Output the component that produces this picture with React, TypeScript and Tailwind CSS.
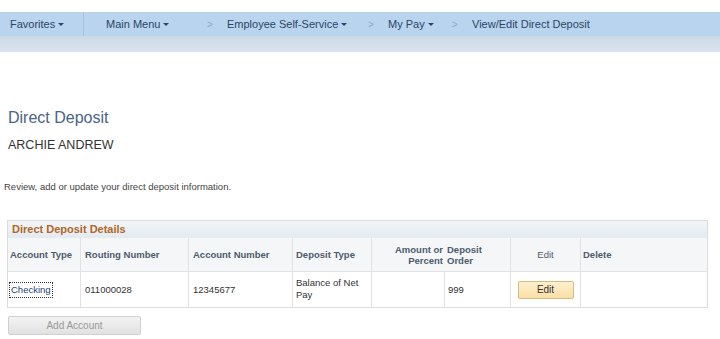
const CRUMBS = [
  { label: "Main Menu", menu: true, w: "w-[101px]" },
  { label: "Employee Self-Service", menu: true, w: "w-[141px]" },
  { label: "My Pay", menu: true, w: "w-[64px]" },
  { label: "View/Edit Direct Deposit", menu: false, w: "" },
];

function Caret() {
  return <span className="ml-[3px] inline-block align-middle border-x-[3px] border-t-[3px] border-x-transparent border-t-[#2c4566]" />;
}

export default function App() {
  return (
    <div className="w-[720px] h-[339px] bg-white overflow-hidden font-['Liberation_Sans',Arial,sans-serif]">
      <div className="h-[12px]" />
      <nav className="h-[24px] bg-[#b8d4ef] flex items-center text-[11px] text-[#2c4566]">
        <div className="w-[84px] h-full flex items-center pl-[10px] border-r border-[#a5c3e0]">
          Favorites
          <Caret />
        </div>
        <div className="flex items-center pl-[22px]">
          {CRUMBS.map((c, i) => (
            <div key={c.label} className="flex items-center">
              {i > 0 && <span className="w-[20px] text-[#8ea9c6] text-[10px]">&gt;</span>}
              <span className={`${c.w} flex items-center`}>
                {c.label}
                {c.menu && <Caret />}
              </span>
            </div>
          ))}
        </div>
      </nav>
      <div className="h-[16px] bg-gradient-to-b from-[#cbd8e6] to-[#dbe4ee]" />

      <div className="pl-[8px] pt-[56px]">
        <h1 className="text-[16px] leading-[20px] text-[#4b6483]">Direct Deposit</h1>
        <p className="mt-[9px] text-[12.5px] leading-[16px] text-[#333]">ARCHIE ANDREW</p>
      </div>
      <p className="pl-[4px] mt-[27px] text-[9.5px] text-[#444]">
        Review, add or update your direct deposit information.
      </p>

      <div className="ml-[7px] mt-[26px] w-[701px] border border-[#dcdcdc]">
        <div className="h-[17px] bg-gradient-to-b from-[#f3f6f9] to-[#e3eaf1] px-[4px] text-[11px] leading-[17px] font-bold text-[#b0671f]">
          Direct Deposit Details
        </div>
        <div className="grid grid-cols-[73px_108px_104px_79px_73px_66px_70px_1fr] text-[9.5px]">
          <div className="h-[34px] bg-[#f5f6f7] border-r border-b border-[#e2e2e2] flex items-center pl-[2px] font-bold text-[#4d5b6d]">Account Type</div>
          <div className="h-[34px] bg-[#f5f6f7] border-r border-b border-[#e2e2e2] flex items-center pl-[4px] font-bold text-[#4d5b6d]">Routing Number</div>
          <div className="h-[34px] bg-[#f5f6f7] border-r border-b border-[#e2e2e2] flex items-center pl-[4px] font-bold text-[#4d5b6d]">Account Number</div>
          <div className="h-[34px] bg-[#f5f6f7] border-r border-b border-[#e2e2e2] flex items-center pl-[3px] font-bold text-[#4d5b6d]">Deposit Type</div>
          <div className="h-[34px] bg-[#f5f6f7] border-b border-[#e2e2e2] flex items-center justify-end pr-[2px] text-right leading-[11px] font-bold text-[#4d5b6d]">Amount or<br />Percent</div>
          <div className="h-[34px] bg-[#f5f6f7] border-r border-b border-[#e2e2e2] flex items-center pl-[2px] leading-[11px] font-bold text-[#4d5b6d]">Deposit<br />Order</div>
          <div className="h-[34px] bg-[#f5f6f7] border-r border-b border-[#e2e2e2] flex items-center justify-center text-[#4d5b6d]">Edit</div>
          <div className="h-[34px] bg-[#f5f6f7] border-b border-[#e2e2e2] flex items-center pl-[2px] font-bold text-[#4d5b6d]">Delete</div>

          <div className="h-[35px] border-r border-[#e2e2e2] flex items-center pl-[2px] text-[#1c3f7a]">
            <span className="outline-1 outline-dotted outline-[#333] px-[1px]">Checking</span>
          </div>
          <div className="h-[35px] border-r border-[#e2e2e2] flex items-center pl-[4px] text-[#333]">011000028</div>
          <div className="h-[35px] border-r border-[#e2e2e2] flex items-center pl-[4px] text-[#333]">12345677</div>
          <div className="h-[35px] border-r border-[#e2e2e2] pt-[5px] pl-[3px] leading-[12px] text-[#333]">Balance of Net<br />Pay</div>
          <div className="h-[35px] border-r border-[#e2e2e2]" />
          <div className="h-[35px] border-r border-[#e2e2e2] flex items-center pl-[3px] text-[#333]">999</div>
          <div className="h-[35px] border-r border-[#e2e2e2] flex items-center justify-center">
            <button className="w-[56px] h-[18px] bg-gradient-to-b from-[#fdf0cf] to-[#f8dfa6] border border-[#d9bb7c] rounded-[2px] text-[10px] text-[#333]">Edit</button>
          </div>
          <div className="h-[35px]" />
        </div>
      </div>

      <button className="ml-[8px] mt-[8px] w-[133px] h-[19px] bg-gradient-to-b from-[#f3f3f3] to-[#e1e1e1] border border-[#d0d0d0] rounded-[2px] text-[10px] text-[#9a9a9a]">
        Add Account
      </button>
    </div>
  );
}
